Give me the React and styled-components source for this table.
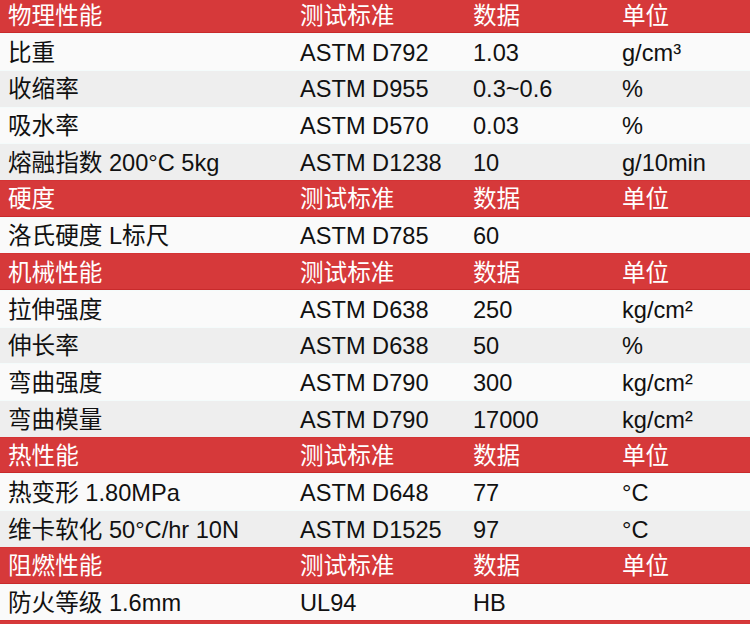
import React from 'react';
import styled, { createGlobalStyle } from 'styled-components';

const Global = createGlobalStyle`
  html, body {
    margin: 0;
    padding: 0;
    background: #fafafa;
    overflow: hidden;
  }
  body {
    font-family: "Liberation Sans", "Noto Sans CJK SC", sans-serif;
  }
`;

const Table = styled.div`
  margin-top: -3.5px;
  width: 750px;
`;

const Row = styled.div`
  display: grid;
  grid-template-columns: 292px 173px 149px 1fr;
  align-items: center;
  height: 36.7px;
  box-sizing: border-box;
  padding-left: 8px;
  font-size: 23.6px;
  white-space: nowrap;
  background: ${p => (p.$head ? '#d6393a' : p.$alt ? '#eeeeee' : '#fafafa')};
  color: ${p => (p.$head ? '#ffffff' : '#111111')};
  border-top: 1px solid ${p => (p.$head ? '#d43334' : '#f4fbfb')};
  border-bottom: 1px solid ${p => (p.$head ? '#c82a2b' : 'transparent')};
`;

const Cell = styled.span`
  line-height: 1;
  padding-top: 4px;
`;

const sections = [
  {
    title: '物理性能',
    rows: [
      ['比重', 'ASTM D792', '1.03', 'g/cm³'],
      ['收缩率', 'ASTM D955', '0.3~0.6', '%'],
      ['吸水率', 'ASTM D570', '0.03', '%'],
      ['熔融指数 200°C 5kg', 'ASTM D1238', '10', 'g/10min'],
    ],
  },
  {
    title: '硬度',
    rows: [['洛氏硬度 L标尺', 'ASTM D785', '60', '']],
  },
  {
    title: '机械性能',
    rows: [
      ['拉伸强度', 'ASTM D638', '250', 'kg/cm²'],
      ['伸长率', 'ASTM D638', '50', '%'],
      ['弯曲强度', 'ASTM D790', '300', 'kg/cm²'],
      ['弯曲模量', 'ASTM D790', '17000', 'kg/cm²'],
    ],
  },
  {
    title: '热性能',
    rows: [
      ['热变形 1.80MPa', 'ASTM D648', '77', '°C'],
      ['维卡软化 50°C/hr 10N', 'ASTM D1525', '97', '°C'],
    ],
  },
  {
    title: '阻燃性能',
    rows: [['防火等级 1.6mm', 'UL94', 'HB', '']],
  },
  { title: '', rows: [] },
];

export default function App() {
  return (
    <>
      <Global />
      <Table>
        {sections.map((s, si) => (
          <React.Fragment key={si}>
            <Row $head>
              <Cell>{s.title}</Cell>
              <Cell>{s.title && '测试标准'}</Cell>
              <Cell>{s.title && '数据'}</Cell>
              <Cell>{s.title && '单位'}</Cell>
            </Row>
            {s.rows.map((r, ri) => (
              <Row key={ri} $alt={ri % 2 === 1}>
                {r.map((c, ci) => (
                  <Cell key={ci}>{c}</Cell>
                ))}
              </Row>
            ))}
          </React.Fragment>
        ))}
      </Table>
    </>
  );
}
